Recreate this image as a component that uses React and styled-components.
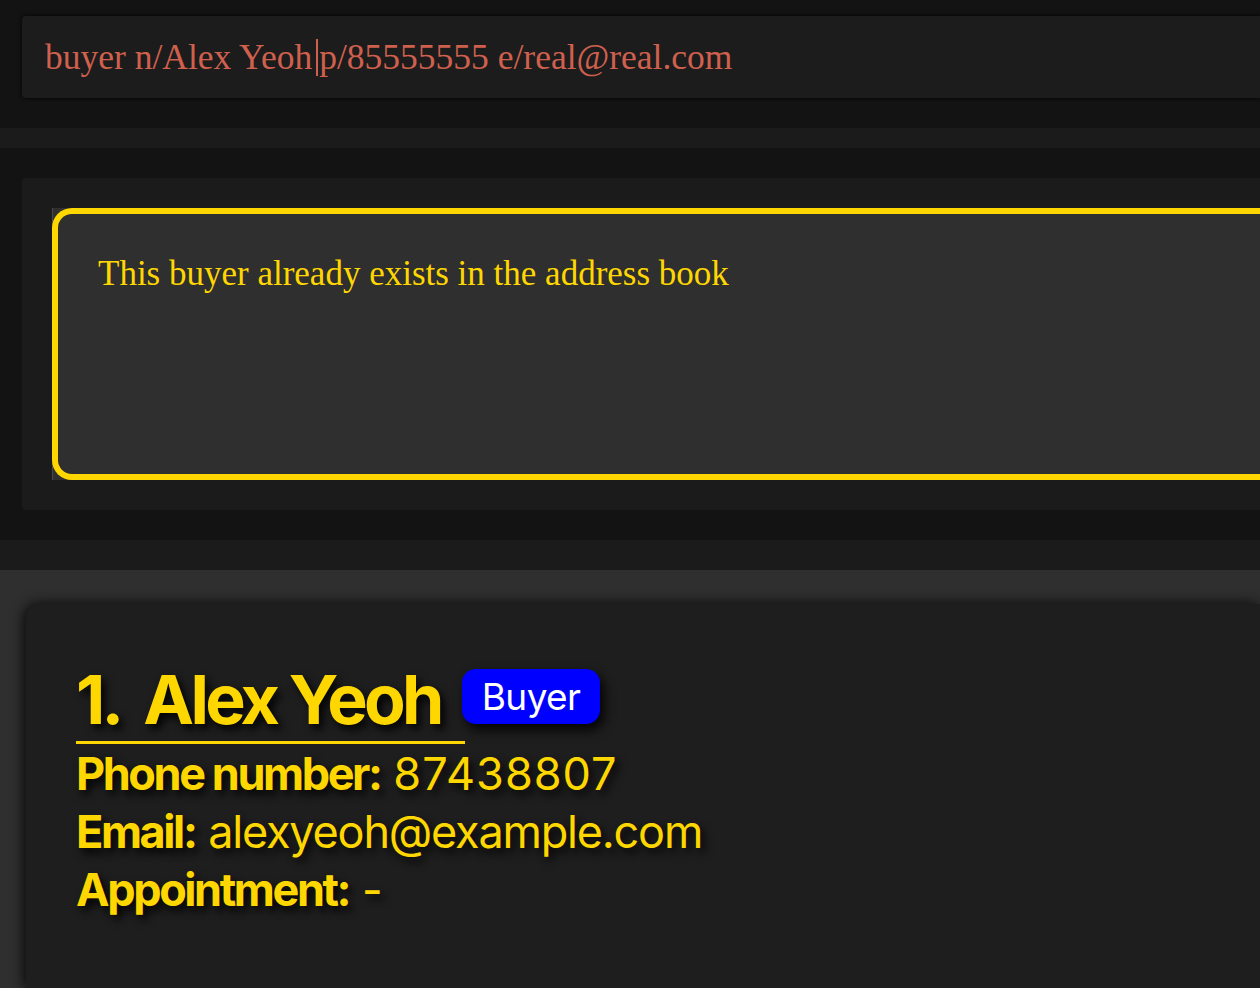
import React from "react";
import styled, { createGlobalStyle } from "styled-components";

const GlobalStyle = createGlobalStyle`
  html, body {
    margin: 0;
    padding: 0;
    background: #131313;
    overflow: hidden;
  }
  #root {
    height: 988px;
    display: flex;
    flex-direction: column;
  }
`;

const TopBar = styled.div`
  padding: 16px 0 30px 22px;
  background: #131313;
`;

const CommandBox = styled.div`
  height: 82px;
  background: #1c1c1c;
  border-radius: 4px 0 0 4px;
  box-shadow: 0 -1px 4px rgba(0, 0, 0, 0.6), 0 1px 3px rgba(0, 0, 0, 0.4);
  display: flex;
  align-items: center;
  padding-left: 23px;
  font-family: "Liberation Serif", "Times New Roman", serif;
  font-size: 35.5px;
  color: #d0604e;
  white-space: pre;
`;

const Caret = styled.span`
  display: inline-block;
  width: 2px;
  height: 37px;
  background: #d0604e;
  margin: 0 1px 0 4px;
`;

const Strip = styled.div`
  height: ${(p) => p.$h}px;
  background: #1b1b1b;
  flex-shrink: 0;
`;

const ResultSection = styled.div`
  padding: 30px 0 30px 22px;
  background: #131313;
`;

const ResultPanel = styled.div`
  background: #1b1b1b;
  border-radius: 4px 0 0 4px;
  padding: 30px 0 30px 30px;
`;

const ResultArea = styled.div`
  height: 272px;
  background: #2f2f2f;
  border-left: 1px solid #4a4a4a;
`;

const ResultFrame = styled.div`
  height: 100%;
  box-sizing: border-box;
  border: 6px solid #ffd700;
  border-right: none;
  border-radius: 20px 0 0 20px;
  margin-left: -1px;
  padding: 40px 0 0 40px;
  font-family: "Liberation Serif", "Times New Roman", serif;
  font-size: 35px;
  color: #ffd700;
`;

const ListArea = styled.div`
  flex: 1;
  background: #2f2f2f;
  padding: 34px 0 0 26px;
  overflow: hidden;
`;

const Card = styled.div`
  height: 100%;
  background: #1e1e1e;
  border-radius: 14px 0 0 0;
  box-shadow: -2px 0 14px rgba(0, 0, 0, 0.85);
  padding: 56px 0 0 50px;
  box-sizing: border-box;
  font-family: Inter, "Noto Sans", sans-serif;
  color: #ffd700;
`;

const HeaderRow = styled.div`
  display: flex;
  align-items: flex-start;
  margin-bottom: 1px;
`;

const Name = styled.div`
  font-size: 68px;
  font-weight: 700;
  letter-spacing: -3.7px;
  line-height: 78px;
  padding: 0 24px 3px 0;
  border-bottom: 3px solid #ffd700;
  text-shadow: 4px 5px 8px rgba(0, 0, 0, 0.95);
  white-space: pre;
`;

const Badge = styled.div`
  margin: 9px 0 0 -3px;
  height: 55px;
  padding: 0 20px;
  box-sizing: border-box;
  display: flex;
  align-items: center;
  background: #0000ff;
  color: #ffffff;
  border-radius: 14px;
  font-size: 37px;
  letter-spacing: -0.6px;
  box-shadow: 4px 6px 12px rgba(0, 0, 0, 0.9);
`;

const Field = styled.div`
  font-size: 45px;
  line-height: 58px;
  text-shadow: 4px 5px 8px rgba(0, 0, 0, 0.95);
  white-space: nowrap;
`;

const Label = styled.span`
  font-weight: 700;
  letter-spacing: -2.4px;
`;

const Value = styled.span`
  letter-spacing: ${(p) => p.$tracking ?? -1.2}px;
`;

export default function App() {
  return (
    <>
      <GlobalStyle />
      <TopBar>
        <CommandBox>
          buyer n/Alex Yeoh<Caret />p/85555555 e/real@real.com
        </CommandBox>
      </TopBar>
      <Strip $h={20} />
      <ResultSection>
        <ResultPanel>
          <ResultArea>
            <ResultFrame>This buyer already exists in the address book</ResultFrame>
          </ResultArea>
        </ResultPanel>
      </ResultSection>
      <Strip $h={30} />
      <ListArea>
        <Card>
          <HeaderRow>
            <Name>{"1.  Alex Yeoh"}</Name>
            <Badge>Buyer</Badge>
          </HeaderRow>
          <Field>
            <Label>Phone number:</Label> <Value $tracking={1}>87438807</Value>
          </Field>
          <Field>
            <Label>Email:</Label> <Value>alexyeoh@example.com</Value>
          </Field>
          <Field>
            <Label>Appointment:</Label> <Value>-</Value>
          </Field>
        </Card>
      </ListArea>
    </>
  );
}
